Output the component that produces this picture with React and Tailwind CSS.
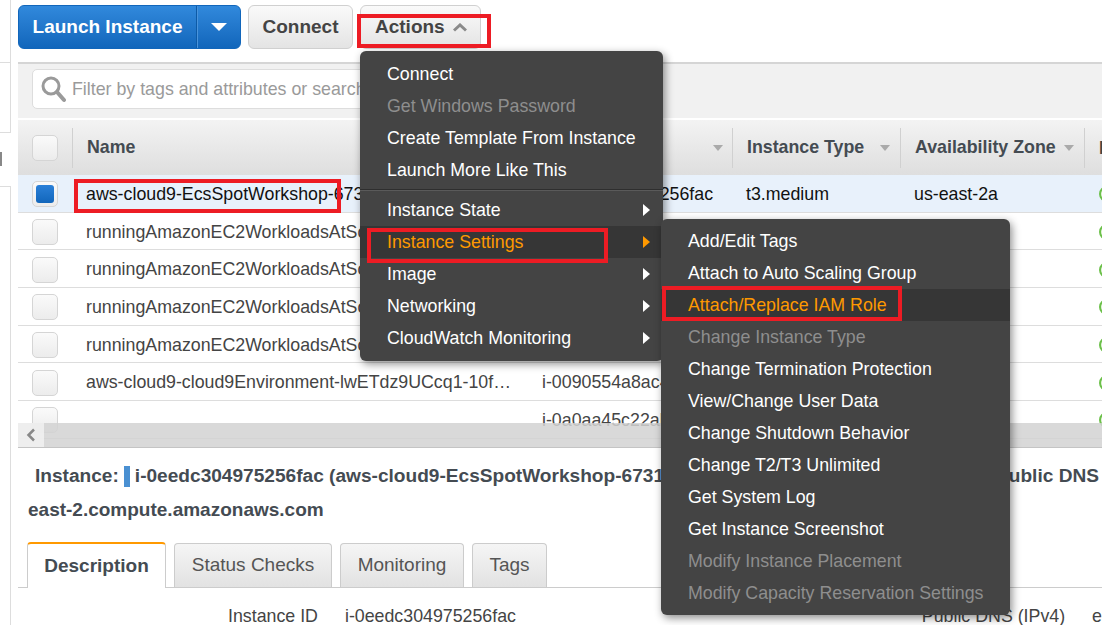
const rows = [
  { name: "aws-cloud9-EcsSpotWorkshop-6731", id: "i-0eedc304975256fac", type: "t3.medium", zone: "us-east-2a", selected: true },
  { name: "runningAmazonEC2WorkloadsAtScale" },
  { name: "runningAmazonEC2WorkloadsAtScale" },
  { name: "runningAmazonEC2WorkloadsAtScale" },
  { name: "runningAmazonEC2WorkloadsAtScale" },
  { name: "aws-cloud9-cloud9Environment-lwETdz9UCcq1-10f…", id: "i-0090554a8ac4" },
  { name: "", id: "i-0a0aa45c22ab" },
];

const actionItems = [
  { label: "Connect" },
  { label: "Get Windows Password", disabled: true },
  { label: "Create Template From Instance" },
  { label: "Launch More Like This" },
  { divider: true },
  { label: "Instance State", sub: true },
  { label: "Instance Settings", sub: true, active: true },
  { label: "Image", sub: true },
  { label: "Networking", sub: true },
  { label: "CloudWatch Monitoring", sub: true },
];

const settingItems = [
  { label: "Add/Edit Tags" },
  { label: "Attach to Auto Scaling Group" },
  { label: "Attach/Replace IAM Role", active: true },
  { label: "Change Instance Type", disabled: true },
  { label: "Change Termination Protection" },
  { label: "View/Change User Data" },
  { label: "Change Shutdown Behavior" },
  { label: "Change T2/T3 Unlimited" },
  { label: "Get System Log" },
  { label: "Get Instance Screenshot" },
  { label: "Modify Instance Placement", disabled: true },
  { label: "Modify Capacity Reservation Settings", disabled: true },
];

function Checkbox({ checked }) {
  return (
    <div className="flex h-[26px] w-[26px] items-center justify-center rounded-[5px] border border-[#d5d5d5] bg-gradient-to-b from-[#fafafa] to-[#ececec]">
      {checked && <div className="h-[18px] w-[18px] rounded-[3px] bg-gradient-to-b from-[#2a80d8] to-[#1166bb]" />}
    </div>
  );
}

function SortCaret() {
  return <div className="h-0 w-0 border-x-[5px] border-t-[6px] border-x-transparent border-t-[#aaaaaa]" />;
}

function HeaderCell({ label }) {
  return (
    <div className="flex h-[40px] items-center justify-between border-l border-[#d0d0d0] pl-[14px] pr-[10px]">
      <span className="whitespace-nowrap font-bold text-[#444b52]">{label}</span>
      <SortCaret />
    </div>
  );
}

function Row({ row }) {
  return (
    <div className={"grid h-[37.7px] shrink-0 grid-cols-[54px_456px_204px_168px_184px_20px] items-center border-b border-[#dddddd] pt-[2px] " + (row.selected ? "bg-[#e8f1fb] text-[#111111]" : "bg-white text-[#444444]")}>
      <div className="pl-[14px]"><Checkbox checked={row.selected} /></div>
      <div className="overflow-hidden whitespace-nowrap pl-[14px]">{row.name}</div>
      <div className="overflow-hidden whitespace-nowrap pl-[14px]">{row.id}</div>
      <div className="pl-[14px]">{row.type}</div>
      <div className="pl-[14px]">{row.zone}</div>
      <div className="overflow-hidden pl-[15px]"><div className="h-[16px] w-[16px] rounded-full border-2 border-[#6cc04a] bg-[#e6f5de]" /></div>
    </div>
  );
}

function MenuItem({ item }) {
  if (item.divider) return <div className="my-[3px] h-[2px] border-t border-b border-t-[#2e2e2e] border-b-[#5a5a5a]" />;
  const color = item.active ? "text-[#ff9900]" : item.disabled ? "text-[#8e8e8e]" : "text-white";
  return (
    <div className={"flex h-[32px] items-center justify-between pl-[27px] pr-[13px] whitespace-nowrap " + color + (item.active ? " bg-[#363636]" : "")}>
      <span>{item.label}</span>
      {item.sub && <div className={"h-0 w-0 border-y-[6px] border-l-[7px] border-y-transparent " + (item.active ? "border-l-[#ff9900]" : "border-l-white")} />}
    </div>
  );
}

function RedBox({ className }) {
  return <div className={"pointer-events-none absolute z-30 border-[4px] border-[#ed1c24] " + className} />;
}

export default function App() {
  return (
    <div className="relative flex h-[625px] w-[1102px] overflow-hidden bg-white font-['Liberation_Sans',Arial,sans-serif] text-[17.8px] text-[#444444]">
      {/* left rail */}
      <div className="relative w-[18px] shrink-0">
        <div className="h-[63px] w-[11px] border-r border-b border-[#dddddd]" />
        <div className="h-[70px] w-[11px] border-r border-b border-[#dddddd]" />
        <div className="mt-[19px] h-[14px] w-[2px] bg-[#888888]" />
        <div className="mt-[20px] h-[440px] w-[11px] border-r border-t border-[#dddddd]" />
      </div>

      <div className="flex min-w-0 flex-1 flex-col">
        {/* toolbar */}
        <div className="flex h-[62px] shrink-0 gap-[7px] pt-[5px] text-[19px] font-bold">
          <div className="flex h-[44px] w-[223px] rounded-[6px] border border-[#1166bb] bg-gradient-to-b from-[#3189dc] to-[#1166bb] text-white">
            <div className="flex w-[178px] items-center justify-center border-r border-[#0d5aa6]">Launch Instance</div>
            <div className="flex flex-1 items-center justify-center border-l border-[#4a94dc]">
              <div className="h-0 w-0 border-x-[8px] border-t-[8px] border-x-transparent border-t-white" />
            </div>
          </div>
          <div className="flex h-[44px] w-[105px] items-center justify-center rounded-[6px] border border-[#d0d0d0] bg-gradient-to-b from-[#fafafa] to-[#e4e4e4]">Connect</div>
          <div className="flex h-[44px] w-[121px] items-center gap-[8px] rounded-[6px] border border-[#d0d0d0] bg-gradient-to-b from-[#fafafa] to-[#e4e4e4] pl-[14px]">
            Actions
            <svg width="14" height="9" viewBox="0 0 14 9"><path d="M1 7.5 7 2l6 5.5" fill="none" stroke="#8a8a8a" strokeWidth="3" /></svg>
          </div>
        </div>

        {/* table */}
        <div className="relative h-[386px] shrink-0 overflow-hidden">
          <div className="flex h-[56px] items-start border-t-2 border-[#d5d5d5] bg-[#f1f1f1] pl-[14px] pt-[5px]">
            <div className="flex h-[40px] w-[420px] items-center gap-[6px] rounded-[5px] border border-[#dddddd] bg-white pl-[7px] text-[#9a9a9a]">
              <svg width="26" height="30" viewBox="0 0 26 30">
                <circle cx="11" cy="12" r="8" fill="none" stroke="#9a9a9a" strokeWidth="3" />
                <path d="M17 18l7 8" stroke="#9a9a9a" strokeWidth="4" strokeLinecap="round" />
              </svg>
              <span className="whitespace-nowrap">Filter by tags and attributes or search</span>
            </div>
          </div>
          <div className="grid h-[57px] grid-cols-[54px_456px_204px_168px_184px_20px] items-center border-t-2 border-white bg-gradient-to-b from-[#f3f3f3] to-[#dedede]">
            <div className="pl-[14px]"><Checkbox /></div>
            <div className="flex h-[40px] items-center border-l border-[#d0d0d0] pl-[14px] font-bold text-[#444b52]">Name</div>
            <div className="flex h-[40px] items-center justify-end pr-[9px]"><SortCaret /></div>
            <HeaderCell label="Instance Type" />
            <HeaderCell label="Availability Zone" />
            <div className="h-[40px] overflow-hidden border-l border-[#d0d0d0] pl-[14px] font-bold leading-[40px]">I</div>
          </div>
          {rows.map((row, i) => (
            <Row key={i} row={row} />
          ))}
          {/* scrollbar */}
          <div className="absolute bottom-[1px] left-0 right-0 flex h-[24px] bg-[#d2d2d2]/85">
            <div className="flex w-[26px] items-center justify-center bg-[#f0f0f0]/90">
              <svg width="10" height="14" viewBox="0 0 10 14"><path d="M8 1.5 2.5 7 8 12.5" fill="none" stroke="#888888" strokeWidth="2.5" /></svg>
            </div>
          </div>
          <div className="absolute bottom-0 left-0 right-0 h-[1px] bg-[#c4c4c4]" />
        </div>

        {/* details */}
        <div className="flex min-h-0 flex-1 flex-col">
          <div className="flex h-[44px] shrink-0 items-end pb-[1px] pl-[17px] text-[19.1px] font-bold whitespace-nowrap text-[#444b52]">
            <span>Instance:</span>
            <span className="mx-[5px] mb-[4px] inline-block h-[21px] w-[6px] shrink-0 bg-[#4a90d2]" />
            <span>i-0eedc304975256fac (aws-cloud9-EcsSpotWorkshop-6731</span>
            <span className="ml-[332px]">Public DNS</span>
          </div>
          <div className="mt-[4px] pl-[10px] text-[19px] leading-[28px] font-bold text-[#444b52]">east-2.compute.amazonaws.com</div>
          <div className="mt-[18px] flex h-[46px] shrink-0 items-end gap-[8px] border-b border-[#cccccc] pl-[9px] text-[19px]">
            <div className="relative -mb-[1px] flex h-[46px] w-[139px] items-center justify-center rounded-t-[4px] border-x border-t-2 border-x-[#cccccc] border-t-[#ff9900] bg-white font-bold text-[#444b52]">Description</div>
            <div className="flex h-[44px] w-[158px] items-center justify-center rounded-t-[4px] border border-b-0 border-[#cccccc] bg-gradient-to-b from-[#f5f5f5] to-[#e2e2e2] text-[#555555]">Status Checks</div>
            <div className="flex h-[44px] w-[124px] items-center justify-center rounded-t-[4px] border border-b-0 border-[#cccccc] bg-gradient-to-b from-[#f5f5f5] to-[#e2e2e2] text-[#555555]">Monitoring</div>
            <div className="flex h-[44px] w-[75px] items-center justify-center rounded-t-[4px] border border-b-0 border-[#cccccc] bg-gradient-to-b from-[#f5f5f5] to-[#e2e2e2] text-[#555555]">Tags</div>
          </div>
          <div className="flex pt-[15px] whitespace-nowrap">
            <span className="w-[300px] text-right">Instance ID</span>
            <span className="ml-[27px] w-[577px]">i-0eedc304975256fac</span>
            <span>Public DNS (IPv4)</span>
            <span className="ml-[27px]">e</span>
          </div>
        </div>
      </div>

      {/* actions menu */}
      <div className="absolute left-[360px] top-[51px] z-10 w-[303px] rounded-[6px] bg-[#444444] py-[7px] shadow-[2px_3px_8px_rgba(0,0,0,0.45)]">
        {actionItems.map((item, i) => (
          <MenuItem key={i} item={item} />
        ))}
      </div>

      {/* instance settings submenu */}
      <div className="absolute left-[661px] top-[219px] z-20 w-[349px] rounded-[6px] bg-[#444444] py-[6px] shadow-[2px_3px_8px_rgba(0,0,0,0.45)]">
        {settingItems.map((item, i) => (
          <MenuItem key={i} item={item} />
        ))}
      </div>

      <RedBox className="left-[357px] top-[14px] h-[34px] w-[134px]" />
      <RedBox className="left-[74px] top-[179px] h-[34px] w-[267px]" />
      <RedBox className="left-[367px] top-[228px] h-[35px] w-[241px]" />
      <RedBox className="left-[662px] top-[286px] h-[35px] w-[240px]" />
    </div>
  );
}
